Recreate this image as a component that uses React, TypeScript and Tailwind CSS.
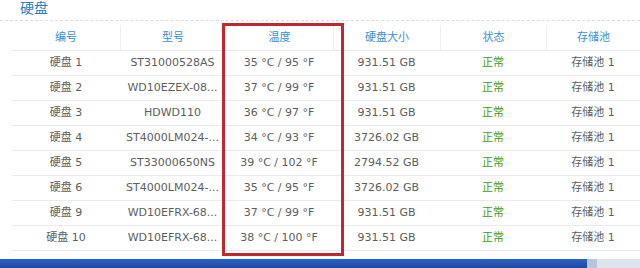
import React from "react";

type Disk = {
  id: string;
  model: string;
  temp: string;
  size: string;
  status: string;
  pool: string;
};

const DISKS: Disk[] = [
  { id: "硬盘 1", model: "ST31000528AS", temp: "35 °C / 95 °F", size: "931.51 GB", status: "正常", pool: "存储池 1" },
  { id: "硬盘 2", model: "WD10EZEX-08...", temp: "37 °C / 99 °F", size: "931.51 GB", status: "正常", pool: "存储池 1" },
  { id: "硬盘 3", model: "HDWD110", temp: "36 °C / 97 °F", size: "931.51 GB", status: "正常", pool: "存储池 1" },
  { id: "硬盘 4", model: "ST4000LM024-...", temp: "34 °C / 93 °F", size: "3726.02 GB", status: "正常", pool: "存储池 1" },
  { id: "硬盘 5", model: "ST33000650NS", temp: "39 °C / 102 °F", size: "2794.52 GB", status: "正常", pool: "存储池 1" },
  { id: "硬盘 6", model: "ST4000LM024-...", temp: "35 °C / 95 °F", size: "3726.02 GB", status: "正常", pool: "存储池 1" },
  { id: "硬盘 9", model: "WD10EFRX-68...", temp: "37 °C / 99 °F", size: "931.51 GB", status: "正常", pool: "存储池 1" },
  { id: "硬盘 10", model: "WD10EFRX-68...", temp: "38 °C / 100 °F", size: "931.51 GB", status: "正常", pool: "存储池 1" },
];

const HEADERS = ["编号", "型号", "温度", "硬盘大小", "状态", "存储池"];
const COLS = "grid grid-cols-[108px_105px_108px_107px_106px_94px]";

export default function App() {
  return (
    <div
      className="relative h-[268px] w-[640px] overflow-hidden bg-white"
      style={{ fontFamily: '"DejaVu Sans", "Noto Sans CJK SC", sans-serif' }}
    >
      <div className="h-[20px] pl-[20px] text-[14px] leading-[16px] text-[#2a7fc0]">硬盘</div>
      <div className="border-t border-dashed border-[#d8dde3]" />

      <div className="ml-[12px] mt-[4px]">
        <div className={`${COLS} h-[26px] border-b border-[#e6e8eb]`}>
          {HEADERS.map((h, i) => (
            <div
              key={h}
              className={`flex items-center justify-center pt-[2px] text-[11px] text-[#3a8fd2] ${i > 0 ? "border-l border-[#eceef0]" : ""}`}
            >
              {h}
            </div>
          ))}
        </div>
        {DISKS.map((d) => (
          <div key={d.id} className={`${COLS} h-[25px] border-b border-[#eaebed] text-[11px] text-[#5e5e5e]`}>
            <div className="flex items-center justify-center">{d.id}</div>
            <div className="flex items-center justify-center">{d.model}</div>
            <div className="flex items-center justify-center">{d.temp}</div>
            <div className="flex items-center justify-center">{d.size}</div>
            <div className="flex items-center justify-center text-[#3f9a20]">{d.status}</div>
            <div className="flex items-center justify-center">{d.pool}</div>
          </div>
        ))}
      </div>

      <div className="absolute bottom-0 left-0 flex h-[9px] w-full">
        <div className="w-[587px] bg-gradient-to-b from-[#2d63c4] to-[#1c4aa6]" />
        <div className="w-[10px] bg-[#b8c6dc]" />
        <div className="flex-1 bg-[#dfe3ea]" />
      </div>

      <div className="pointer-events-none absolute left-[222px] top-[23px] h-[233px] w-[122px] border-[3px] border-[#c0282f]" />
    </div>
  );
}
